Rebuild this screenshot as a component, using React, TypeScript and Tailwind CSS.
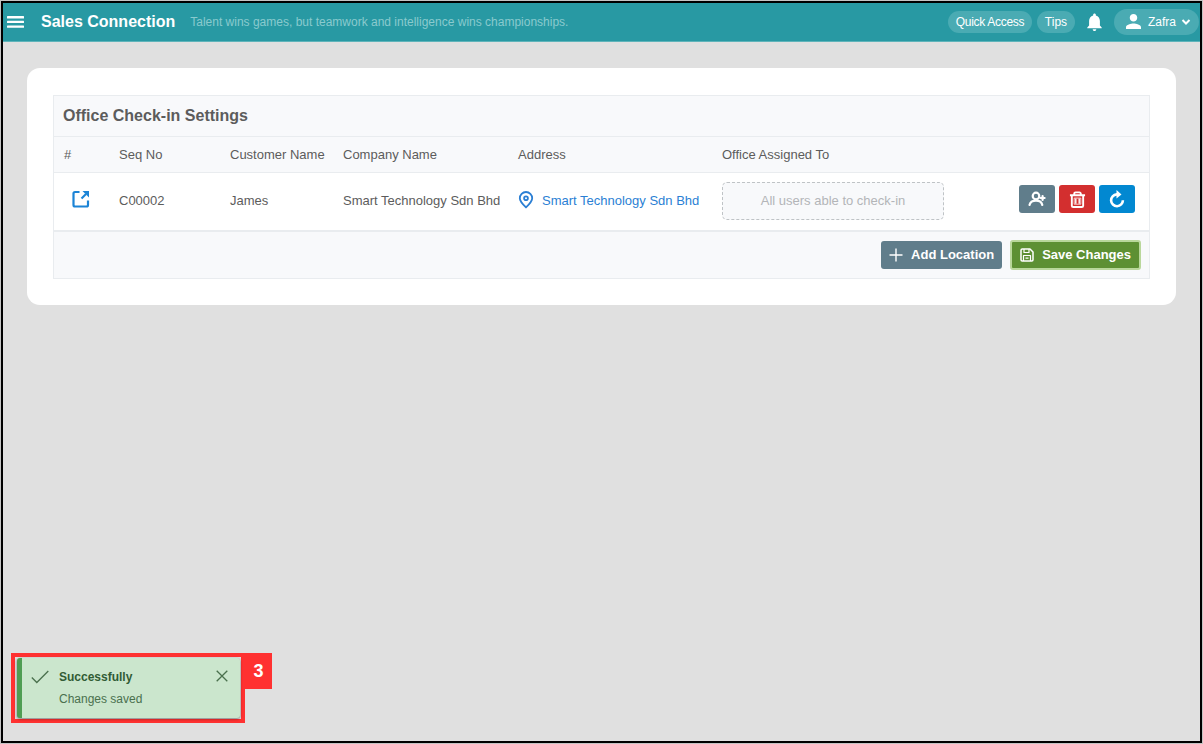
import type { ReactNode } from "react";

type IconProps = { className?: string };

function MenuIcon({ className }: IconProps) {
  return (
    <svg viewBox="0 0 17 12" className={className} fill="currentColor" aria-hidden="true">
      <rect x="0" y="0" width="17" height="2.400" rx="0.5" />
      <rect x="0" y="4.700" width="17" height="2.400" rx="0.5" />
      <rect x="0" y="9.400" width="17" height="2.400" rx="0.5" />
    </svg>
  );
}

function BellIcon({ className }: IconProps) {
  return (
    <svg viewBox="4 2 16 20" className={className} fill="currentColor" aria-hidden="true">
      <path d="M12 22c1.1 0 2-.9 2-2h-4c0 1.1.89 2 2 2zm6-6v-5c0-3.07-1.64-5.64-4.5-6.32V4c0-.83-.67-1.5-1.5-1.5s-1.5.67-1.5 1.5v.68C7.63 5.36 6 7.92 6 11v5l-2 2v1h16v-1l-2-2z" />
    </svg>
  );
}

function PersonIcon({ className }: IconProps) {
  return (
    <svg viewBox="4 4 16 16" className={className} fill="currentColor" aria-hidden="true">
      <path d="M12 12c2.21 0 4-1.79 4-4s-1.79-4-4-4-4 1.79-4 4 1.79 4 4 4zm0 2c-2.67 0-8 1.34-8 4v2h16v-2c0-2.66-5.33-4-8-4z" />
    </svg>
  );
}

function ChevronIcon({ className }: IconProps) {
  return (
    <svg viewBox="0 0 10 8" className={className} fill="none" stroke="currentColor" strokeWidth="2" aria-hidden="true">
      <path d="M1.5 2 5 5.500 8.500 2" />
    </svg>
  );
}

function OpenIcon({ className }: IconProps) {
  return (
    <svg viewBox="0 0 18 18" className={className} fill="none" stroke="currentColor" strokeWidth="2.200" aria-hidden="true">
      <path d="M7.500 2H3a1.500 1.500 0 0 0-1.500 1.500V15A1.500 1.500 0 0 0 3 16.500h11.500A1.500 1.500 0 0 0 16 15v-4.500" />
      <path d="M9.500 8.500l4.500-4.500" />
      <path d="M10.500 1H17v6.500z" fill="currentColor" stroke="none" />
    </svg>
  );
}

function PinIcon({ className }: IconProps) {
  return (
    <svg viewBox="0 0 16 18" className={className} fill="none" stroke="currentColor" strokeWidth="1.800" aria-hidden="true">
      <path d="M8 16.300C5 13.500 1.800 10.500 1.800 7.200a6.200 6.200 0 0 1 12.400 0c0 3.300-3.200 6.300-6.200 9.100z" />
      <circle cx="8" cy="7.200" r="1.900" />
    </svg>
  );
}

function AddUserIcon({ className }: IconProps) {
  return (
    <svg viewBox="0 0 18 16" className={className} fill="none" stroke="currentColor" strokeWidth="2.200" strokeLinecap="round" aria-hidden="true">
      <circle cx="8" cy="5" r="3.300" />
      <path d="M1.500 14c.7-3 3-4.300 6.500-4.300s5.700 1.300 6.300 4.300" />
      <path d="M14.600 5v4M12.600 7h4" />
    </svg>
  );
}

function TrashIcon({ className }: IconProps) {
  return (
    <svg viewBox="0 0 18 18" className={className} fill="none" stroke="currentColor" strokeWidth="2" strokeLinejoin="round" aria-hidden="true">
      <path d="M1 4.500h16M5.500 4.500V3A1.500 1.500 0 0 1 7 1.500h4A1.500 1.500 0 0 1 12.500 3v1.500" />
      <path d="M3 5v10.500A1.500 1.500 0 0 0 4.500 17h9a1.500 1.500 0 0 0 1.500-1.500V5" />
      <path d="M7.200 8v5.500M10.800 8v5.500" strokeWidth="1.500" />
      <path d="M5.500 7.500h7V14h-7z" strokeWidth="0.800" />
    </svg>
  );
}

function RefreshIcon({ className }: IconProps) {
  return (
    <svg viewBox="0 0 16 18" className={className} fill="none" stroke="currentColor" strokeWidth="2.600" aria-hidden="true">
      <path d="M9.500 4.400H7.700a5.900 5.900 0 1 0 6.200 5.900" />
      <path d="M7.500 0 12.500 4.400 7.500 8.600z" fill="currentColor" stroke="none" />
    </svg>
  );
}

function PlusIcon({ className }: IconProps) {
  return (
    <svg viewBox="0 0 14 14" className={className} fill="none" stroke="currentColor" strokeWidth="1.400" aria-hidden="true">
      <path d="M7 .5v13M.5 7h13" />
    </svg>
  );
}

function SaveIcon({ className }: IconProps) {
  return (
    <svg viewBox="0 0 14 14" className={className} fill="none" stroke="currentColor" strokeWidth="1.500" strokeLinejoin="round" aria-hidden="true">
      <path d="M1 2.200A1.200 1.200 0 0 1 2.200 1H10l3 3v7.800a1.200 1.200 0 0 1-1.200 1.200H2.200A1.200 1.200 0 0 1 1 11.800z" />
      <path d="M4 1v3.500h5V1M3.500 13V7.500h7V13M5.500 10.200h3" strokeWidth="1.200" />
    </svg>
  );
}

function CheckIcon({ className }: IconProps) {
  return (
    <svg viewBox="0 0 18 14" className={className} fill="none" stroke="currentColor" strokeWidth="1.300" aria-hidden="true">
      <path d="M.8 7.500 5.800 12.500 17.300 1" />
    </svg>
  );
}

function CloseIcon({ className }: IconProps) {
  return (
    <svg viewBox="0 0 12 12" className={className} fill="none" stroke="currentColor" strokeWidth="1.300" aria-hidden="true">
      <path d="M.7.7l10.600 10.600M11.300.7.7 11.300" />
    </svg>
  );
}

function ActionButton({ label, className, children }: { label: string; className: string; children: ReactNode }) {
  return (
    <button type="button" aria-label={label} className={`flex h-7 w-9 items-center justify-center rounded-[3px] text-white ${className}`}>
      {children}
    </button>
  );
}

function Header() {
  return (
    <header className="flex h-[39px] items-center border-b border-[#5fb4ba] bg-[#2899a3] pr-px pb-px pl-1 text-white">
      <button type="button" aria-label="Menu" className="flex">
        <MenuIcon className="h-3 w-[17px]" />
      </button>
      <h1 className="ml-[17px] text-[16px] leading-5 font-bold whitespace-nowrap">Sales Connection</h1>
      <p className="ml-[15px] text-[12px] leading-5 whitespace-nowrap text-[#8acace]">
        Talent wins games, but teamwork and intelligence wins championships.
      </p>
      <nav className="ml-auto flex shrink-0 items-center text-[12px] leading-[22px]">
        <button type="button" className="w-[84px] rounded-full bg-[#4aabb3] text-center tracking-tight">Quick Access</button>
        <button type="button" className="ml-[5px] w-[38px] rounded-full bg-[#4aabb3] text-center">Tips</button>
        <button type="button" aria-label="Notifications" className="ml-3 flex">
          <BellIcon className="h-[18px] w-[15px]" />
        </button>
        <button type="button" className="ml-3 flex h-[26px] items-center rounded-full bg-[#4aabb3] pr-2 pl-3">
          <PersonIcon className="size-[15px]" />
          <span className="ml-[7px]">Zafra</span>
          <ChevronIcon className="ml-[5px] h-2 w-[10px]" />
        </button>
      </nav>
    </header>
  );
}

function SettingsPanel() {
  return (
    <section className="border border-[#e9ecef] bg-[#f8f9fb]">
      <h2 className="px-[9px] py-[10px] text-[16px] leading-5 font-bold">Office Check-in Settings</h2>
      <table className="w-full table-fixed border-collapse text-left text-[13px] leading-5">
        <colgroup>
          <col className="w-[55px]" />
          <col className="w-[111px]" />
          <col className="w-[113px]" />
          <col className="w-[175px]" />
          <col className="w-[204px]" />
          <col className="w-[242px]" />
          <col />
        </colgroup>
        <thead>
          <tr className="h-9 border-y border-[#e9ecef] whitespace-nowrap [&>th]:px-[10px] [&>th]:font-normal">
            <th scope="col">#</th>
            <th scope="col">Seq No</th>
            <th scope="col">Customer Name</th>
            <th scope="col">Company Name</th>
            <th scope="col">Address</th>
            <th scope="col">Office Assigned To</th>
            <th scope="col" aria-label="Actions" />
          </tr>
        </thead>
        <tbody>
          <tr className="h-[58px] border-b-2 border-[#e9ecef] bg-white [&>td]:px-[10px]">
            <td>
              <a href="#open" aria-label="Open C00002" className="ml-2 flex pb-1 text-[#1c84d6]">
                <OpenIcon className="size-[18px]" />
              </a>
            </td>
            <td>C00002</td>
            <td>James</td>
            <td className="whitespace-nowrap">Smart Technology Sdn Bhd</td>
            <td>
              <a href="#map" className="flex items-start gap-2 whitespace-nowrap text-[#2b7fd4]">
                <PinIcon className="h-[18px] w-4" />
                Smart Technology Sdn Bhd
              </a>
            </td>
            <td>
              <button type="button" className="block h-[38px] w-full rounded-[5px] border border-dashed border-[#bfc3c6] bg-[#f8f9fb] text-center text-[#b3b5b8]">
                All users able to check-in
              </button>
            </td>
            <td>
              <div className="flex justify-end gap-1 pr-1 pb-1">
                <ActionButton label="Assign users" className="bg-[#607d8b]">
                  <AddUserIcon className="h-4 w-[18px]" />
                </ActionButton>
                <ActionButton label="Delete" className="bg-[#d32f2f]">
                  <TrashIcon className="size-[17px]" />
                </ActionButton>
                <ActionButton label="Refresh" className="bg-[#0288d1]">
                  <RefreshIcon className="h-[18px] w-4" />
                </ActionButton>
              </div>
            </td>
          </tr>
        </tbody>
      </table>
      <div className="flex justify-end gap-2 p-2 text-[13px] leading-[26px] font-bold text-white">
        <button type="button" className="my-px flex h-7 items-center gap-2 rounded-[3px] bg-[#607d8b] px-2">
          <PlusIcon className="size-[14px]" />
          Add Location
        </button>
        <button type="button" className="flex h-[30px] items-center gap-2 rounded-[3px] border-2 border-[#b9d79b] bg-[#5d9033] px-2">
          <SaveIcon className="size-[14px]" />
          Save Changes
        </button>
      </div>
    </section>
  );
}

function Toast() {
  return (
    <aside className="fixed bottom-[21px] left-[11px] flex items-start">
      <div className="border-4 border-[#ff3131] bg-[#e0e0e0] py-px pr-px pl-[2px]">
        <div role="status" className="flex h-[60px] w-[223px] rounded-[3px] border-l-[5px] border-[#4f9d53] bg-[#cbe6cd] pt-2 text-[12px] text-[#4a704d] shadow-[0_1px_3px_rgba(0,0,0,0.45)]">
          <CheckIcon className="mt-1 ml-[9px] h-[14px] w-[18px]" />
          <div className="ml-[10px] leading-[22px]">
            <p className="font-bold text-[#315c35]">Successfully</p>
            <p>Changes saved</p>
          </div>
          <button type="button" aria-label="Close" className="mt-1 mr-3 ml-auto flex self-start">
            <CloseIcon className="size-3" />
          </button>
        </div>
      </div>
      <div className="flex h-9 w-[27px] items-center justify-center bg-[#ff3131] text-[18px] font-bold text-white">3</div>
    </aside>
  );
}

export default function App() {
  return (
    <div className="min-h-screen bg-[#c4c4c4] p-px font-['Liberation_Sans',Arial,sans-serif] text-[#5c5c5c]">
      <div className="min-h-[calc(100vh-2px)] border-2 border-black bg-[#e0e0e0]">
        <Header />
        <main className="px-6 pt-[26px]">
          <div className="rounded-[13px] bg-white px-[26px] pt-[27px] pb-[26px]">
            <SettingsPanel />
          </div>
        </main>
        <Toast />
      </div>
    </div>
  );
}
